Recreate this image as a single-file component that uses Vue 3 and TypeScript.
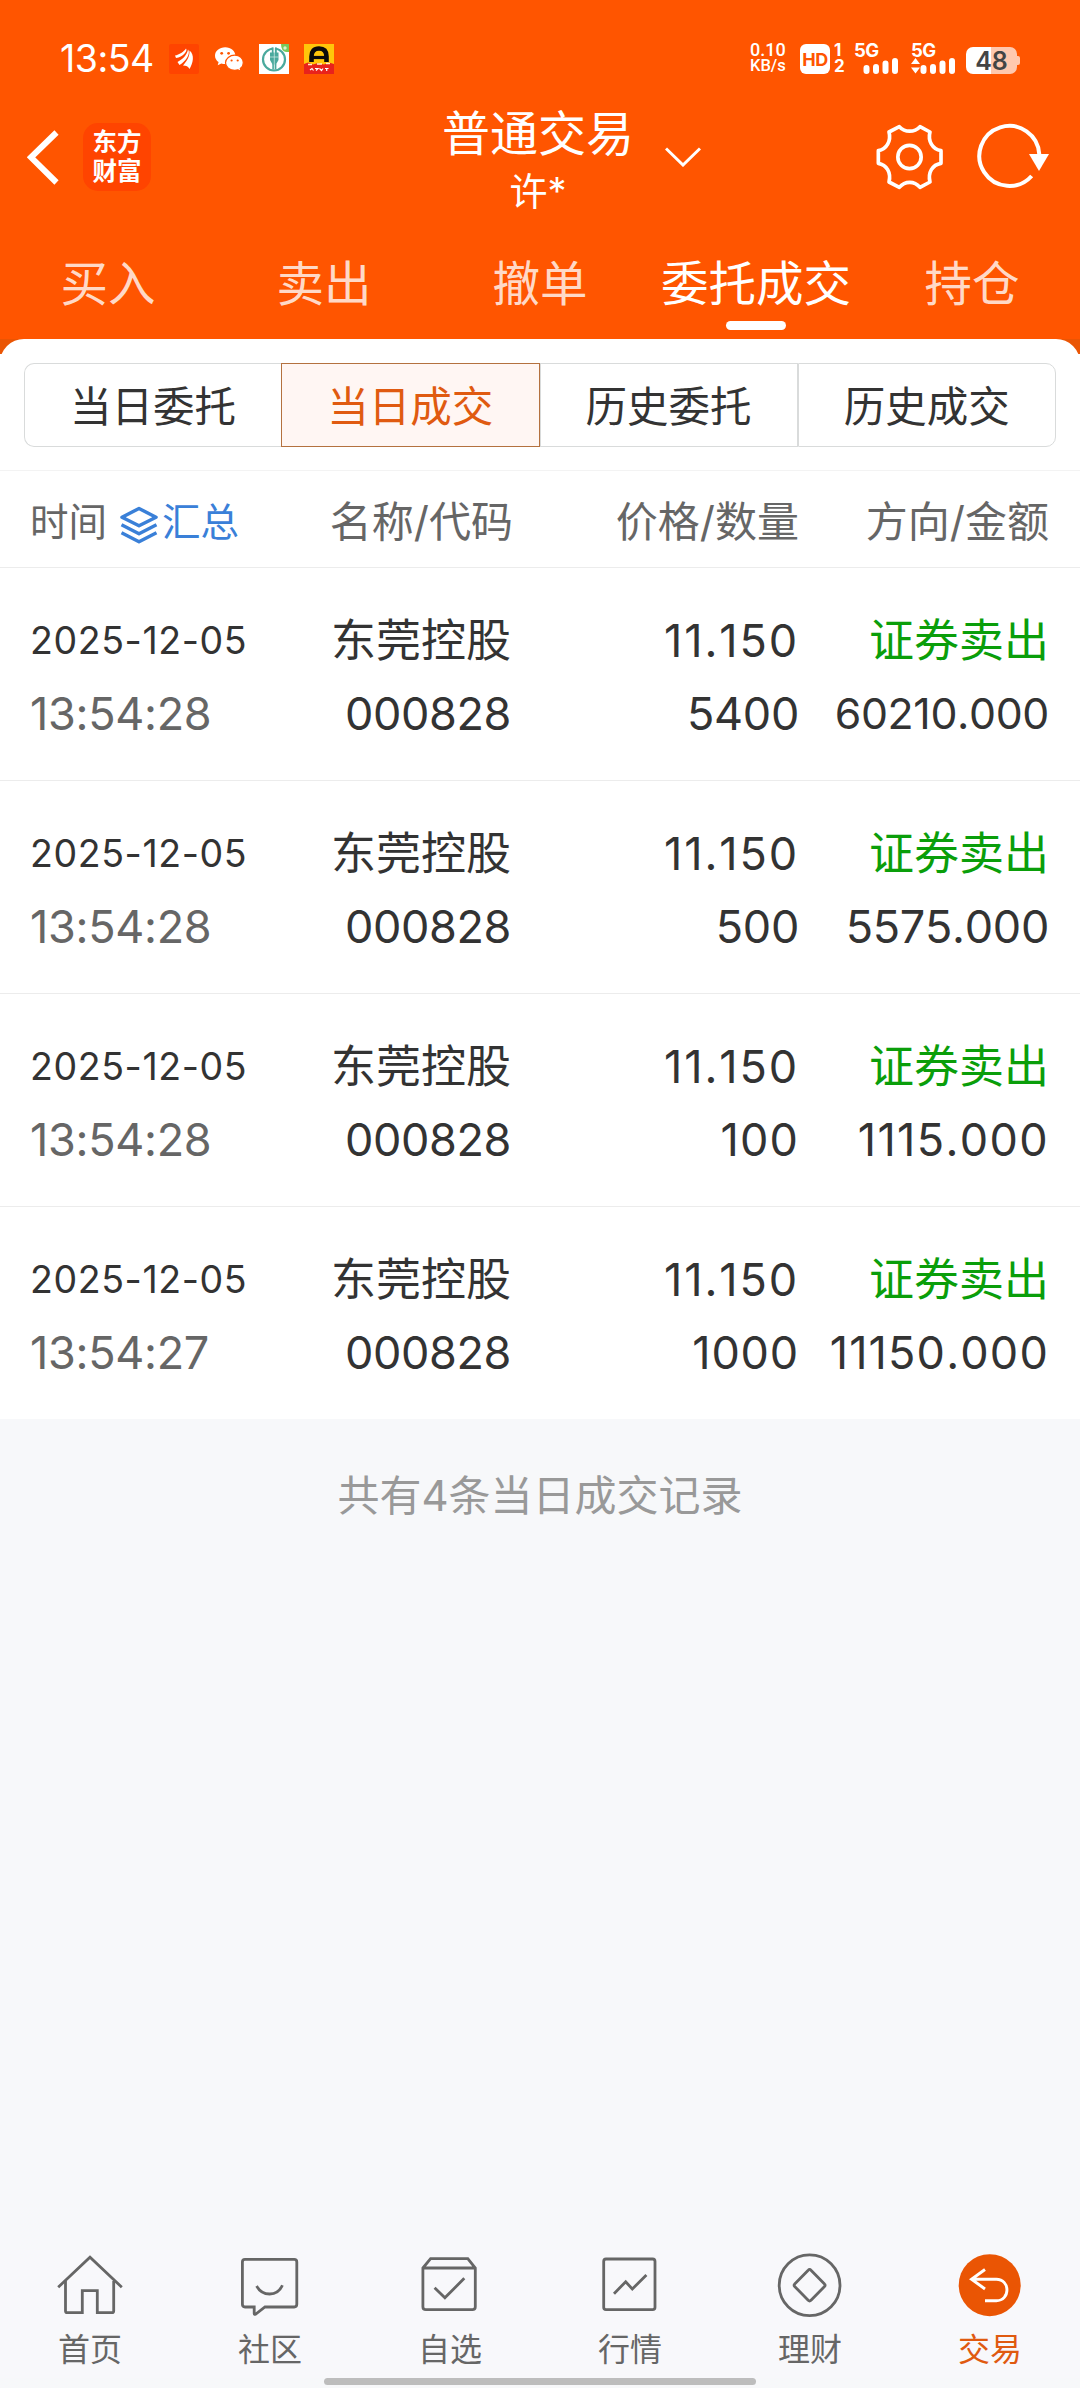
<script setup lang="ts">
interface Trade {
  date: string
  time: string
  name: string
  code: string
  price: string
  volume: string
  side: string
  amount: string
  compact?: boolean
}

const tabs: string[] = ['买入', '卖出', '撤单', '委托成交', '持仓']
const activeTab = '委托成交'

const segments: string[] = ['当日委托', '当日成交', '历史委托', '历史成交']
const activeSegment = '当日成交'

const trades: Trade[] = [
  { date: '2025-12-05', time: '13:54:28', name: '东莞控股', code: '000828', price: '11.150', volume: '5400', side: '证券卖出', amount: '60210.000', compact: true },
  { date: '2025-12-05', time: '13:54:28', name: '东莞控股', code: '000828', price: '11.150', volume: '500', side: '证券卖出', amount: '5575.000' },
  { date: '2025-12-05', time: '13:54:28', name: '东莞控股', code: '000828', price: '11.150', volume: '100', side: '证券卖出', amount: '1115.000' },
  { date: '2025-12-05', time: '13:54:27', name: '东莞控股', code: '000828', price: '11.150', volume: '1000', side: '证券卖出', amount: '11150.000' },
]

const tracking = (text: string): string => {
  const ones = text.split('1').length - 1
  return ((ones * 4.4) / text.length - 0.3).toFixed(2) + 'px'
}

interface NavItem {
  label: string
  paths: string[]
}

const navItems: NavItem[] = [
  {
    label: '首页',
    paths: ['M3.2 37.2 35 7.2 66.8 37.2', 'M10.5 31V61Q10.5 62.7 12.2 62.7H27.3V40.7H42.3V62.7H57Q58.7 62.7 58.7 61V31'],
  },
  {
    label: '社区',
    paths: ['M10 9.3H59.2Q61.8 9.3 61.8 12V54.3Q61.8 57 59.2 57H30L20.5 64.3Q19.2 64.8 19.2 63.5V57H10Q7.4 57 7.4 54.3V12Q7.4 9.3 10 9.3Z', 'M21.6 36Q26 44 34.6 44Q43.5 44 47.4 35.3'],
  },
  {
    label: '自选',
    paths: ['M7.9 18 15.6 8.7H52.8L60.3 18V56.7Q60.3 59.7 57.3 59.7H10.9Q7.9 59.7 7.9 56.7ZM7.9 18H60.3', 'M19.6 37.7 29.9 47.8 49.3 28.3'],
  },
  {
    label: '行情',
    paths: ['M11 9H57.6Q60 9 60 11.4V57.3Q60 59.7 57.6 59.7H11Q8.7 59.7 8.7 57.3V11.4Q8.7 9 11 9Z', 'M19 43.7 30.7 31.7 37.3 39 51.4 25'],
  },
  {
    label: '理财',
    paths: ['M4.2 35.3a30.4 30.4 0 1 0 60.8 0a30.4 30.4 0 1 0-60.8 0Z', 'M33.2 20.2Q34.6 18.7 36 20.2L49.5 34Q50.8 35.2 49.5 36.5L36 50.3Q34.6 51.7 33.2 50.3L19.7 36.5Q18.4 35.2 19.7 34Z'],
  },
]
</script>

<template>
  <div class="screen">
    <header class="top">
      <div class="status">
        <div class="status-left">
          <span class="clock">13:54</span>
          <svg class="app" viewBox="0 0 30 30">
            <rect width="30" height="30" rx="2" fill="#ff4400" />
            <path d="M6 11.500C10 11 15 7.500 17 4.500C19 7 14 13 7 14ZM8.500 18C14 15 18 11 19 5.500C22 9 17 17.500 10.500 21ZM14 21.500C18 17 21 12 20.500 6.500C26 11 24 19 20.500 25C19.500 22.500 17 21.500 14 21.500Z" fill="#fff" />
          </svg>
          <svg class="app" viewBox="0 0 30 30">
            <path d="M11.200 3.300C5.500 3.300 1 7 1 11.700C1 14.300 2.400 16.600 4.600 18.100L3.700 21.200L7.300 19.400C8.600 19.900 9.900 20 11.200 20C17 20 21.400 16.300 21.400 11.700S17 3.300 11.200 3.300Z" fill="#fff" />
            <path d="M20.800 11.200C15.700 11.200 11.500 14.600 11.500 18.800S15.700 26.300 20.800 26.300C21.900 26.300 23 26.100 24 25.800L27 27.300L26.300 24.600C28.200 23.200 29.300 21.200 29.300 18.800C29.300 14.600 25.800 11.200 20.800 11.200Z" fill="#fff" stroke="#ff5500" stroke-width="1.200" />
            <g fill="#ff5500"><circle cx="7.700" cy="9.300" r="1.400" /><circle cx="14.600" cy="9.300" r="1.400" /><circle cx="17.600" cy="16.500" r="1.100" /><circle cx="23.700" cy="16.500" r="1.100" /></g>
          </svg>
          <svg class="app" viewBox="0 0 30 30">
            <rect width="30" height="30" fill="#fff" />
            <circle cx="15" cy="15.500" r="11" fill="none" stroke="#4aa99d" stroke-width="2.200" />
            <path d="M14.200 0H16.200V6H14.200Z" fill="#fff" />
            <path d="M11 8.500H19.500V16L17 20.500H13.500L11 16Z" fill="#4aa99d" />
            <path d="M13.700 3.500V9M16.900 3.500V9M14.200 20V25.500M16.500 20V25.500" fill="none" stroke="#4aa99d" stroke-width="1.800" />
            <path d="M15.300 4V25M11 13H19.500" stroke="#d5eeea" stroke-width=".700" />
            <path d="M22 0H30V8H27Q22 7 22 0Z" fill="#79c95b" /><circle cx="26" cy="4" r="1.700" fill="#d8f3cd" />
          </svg>
          <svg class="app" viewBox="0 0 30 30">
            <rect width="30" height="30" fill="#ffc60a" />
            <path d="M0 20 4 18.500 9 20.500 14 19 20 20.500 25 18.500 30 20V30H0Z" fill="#e8221c" />
            <path d="M7.500 18V12.500Q7.500 4.500 15 4.500T22.500 12.500V18" fill="none" stroke="#0b0b0b" stroke-width="4.600" />
            <path d="M9 13.500H21" stroke="#0b0b0b" stroke-width="3.200" />
            <path d="M4 20.500H8M13 20H18M22 19.500H26" stroke="#fff3c0" stroke-width="1.500" />
            <path d="M6 26 8 24.500 9.500 26.500M11 24.500H14L12 26.500M15.500 24.500 17.500 26.500 19 24.500M21 24.500H24.500M22.700 24.500V27" stroke="#fff" stroke-width="1.200" fill="none" />
          </svg>
        </div>
        <div class="status-right">
          <div class="speed"><span>0.10</span><span>KB/s</span></div>
          <span class="hd">HD</span>
          <div class="sims"><span>1</span><span>2</span></div>
          <div class="signal">
            <span>5G</span>
            <svg viewBox="0 0 46 16"><path d="M9 10V13M18.500 9V13M28 5.500V13M37.500 3V13" transform="translate(3.500 0)" stroke="#fff" stroke-width="6" stroke-linecap="round" /></svg>
          </div>
          <div class="signal second">
            <span>5G</span>
            <svg viewBox="0 0 46 16"><path d="M9 10V13M18.500 9V13M28 5.500V13M37.500 3V13" transform="translate(3.500 0)" stroke="#fff" stroke-width="6" stroke-linecap="round" /><path d="M4.500 0 9 6H0ZM0 9.500H9L4.500 15.500Z" fill="#fff" /></svg>
          </div>
          <div class="battery"><span>48</span></div>
        </div>
      </div>

      <div class="bar">
        <svg class="back" viewBox="0 0 32 55"><path d="M29.500 2.500 4 27.300 29.500 52.500" fill="none" stroke="#fff" stroke-width="6" /></svg>
        <div class="logo"><span>东方</span><span>财富</span></div>
        <div class="title">
          <div class="title-main">普通交易</div>
          <div class="title-sub">许*</div>
        </div>
        <svg class="down" viewBox="0 0 36 20"><path d="M1 1.500 18 18 35 1.500" fill="none" stroke="#fff" stroke-width="3" /></svg>
        <svg class="gear" viewBox="471 309 201 204">
          <g fill="none" stroke="#fff" stroke-width="11" stroke-linejoin="round">
            <path d="M541 320C558 338 586 338 603 320L633 336C626 362 640 388 666 392V430C640 434 626 458 633 486L603 502C586 482 558 482 541 502L510 486C517 458 503 434 478 430V392C503 388 517 362 510 336Z" />
            <circle cx="571.500" cy="411" r="35" />
          </g>
        </svg>
        <svg class="refresh" viewBox="775 309 216 204">
          <path d="M939 468A90 90 0 1 1 962 404" fill="none" stroke="#fff" stroke-width="12" />
          <path d="M931 402H991L961 453Z" fill="#fff" />
        </svg>
      </div>

      <nav class="tabs">
        <div v-for="tab in tabs" :key="tab" class="tab" :class="{ active: tab === activeTab }">{{ tab }}</div>
      </nav>
    </header>

    <main class="sheet">
      <div class="sheet-top">
        <div class="segments">
          <div v-for="seg in segments" :key="seg" class="segment" :class="{ active: seg === activeSegment }">{{ seg }}</div>
        </div>
      </div>

      <div class="cols head">
        <div class="head-time">
          <span>时间</span>
          <svg class="layers" viewBox="0 0 38 38">
            <path d="M19 2.500 36 11.300 19 19.800 2 11.300ZM1.500 18.800 19 27.700 36.500 18.800M1.500 26.800 19 35.700 36.500 26.800" fill="none" stroke="#3a80d8" stroke-width="3.500" stroke-linejoin="round" />
          </svg>
          <span class="sum">汇总</span>
        </div>
        <div class="head-name">名称/代码</div>
        <div>价格/数量</div>
        <div>方向/金额</div>
      </div>

      <div v-for="(t, i) in trades" :key="i" class="cols row">
        <div class="c-time"><p class="date">{{ t.date }}</p><p class="time">{{ t.time }}</p></div>
        <div><p>{{ t.name }}</p><p class="code">{{ t.code }}</p></div>
        <div>
          <p :style="{ letterSpacing: tracking(t.price) }">{{ t.price }}</p>
          <p :style="{ letterSpacing: tracking(t.volume) }">{{ t.volume }}</p>
        </div>
        <div>
          <p class="sell">{{ t.side }}</p>
          <p v-if="t.compact" class="compact">{{ t.amount }}</p>
          <p v-else :style="{ letterSpacing: tracking(t.amount) }">{{ t.amount }}</p>
        </div>
      </div>
    </main>

    <p class="summary">共有4条当日成交记录</p>

    <footer class="nav">
      <div v-for="item in navItems" :key="item.label" class="nav-item">
        <svg viewBox="0 0 70 70"><path v-for="p in item.paths" :key="p" :d="p" fill="none" stroke="#666" stroke-width="2.800" /></svg>
        <span>{{ item.label }}</span>
      </div>
      <div class="nav-item current">
        <svg viewBox="0 0 70 70">
          <circle cx="34.700" cy="35.200" r="31" fill="#ea5504" />
          <path d="M30 19.500 16.500 29.300 30 39M16.500 29.300H41.300C55.500 29.300 55.500 50.700 41.300 50.700H30" fill="none" stroke="#fff" stroke-width="2.900" />
        </svg>
        <span>交易</span>
      </div>
    </footer>
    <div class="home-bar"></div>
  </div>
</template>

<style>
body {
  margin: 0;
  background: #f7f8fa;
}
</style>

<style scoped>
.screen {
  display: flex;
  flex-direction: column;
  width: 1080px;
  height: 2388px;
  overflow: hidden;
  background: #f7f8fa;
  color: #333;
  font-family: Inter, 'Noto Sans CJK SC', sans-serif;
}
p {
  margin: 0;
}
svg {
  display: block;
  flex: none;
}
.top {
  height: 339px;
  background: #ff5500;
  color: #fff;
}
.status {
  display: flex;
  justify-content: space-between;
  height: 74px;
  padding: 0 63px 0 60px;
  box-sizing: border-box;
}
.status-left {
  display: flex;
  align-items: flex-end;
}
.clock {
  width: 109px;
  font-size: 37.500px;
  line-height: 30px;
  letter-spacing: -0.500px;
  white-space: nowrap;
}
.app {
  width: 30px;
  height: 30px;
  margin-right: 15px;
}
.status-right {
  display: flex;
  align-items: flex-end;
}
.speed {
  display: flex;
  flex-direction: column;
  width: 50px;
  font-family: Roboto, sans-serif;
  font-size: 18px;
  line-height: 16px;
  font-weight: 500;
}
.speed span:last-child {
  font-size: 16.500px;
}
.hd {
  width: 30px;
  height: 30px;
  border-radius: 6px;
  background: #fff;
  color: #ff5500;
  font-size: 18px;
  font-weight: 700;
  line-height: 31px;
  text-align: center;
  letter-spacing: -0.500px;
}
.sims {
  display: flex;
  flex-direction: column;
  width: 20px;
  margin-left: 4px;
  font-size: 17px;
  font-weight: 700;
  line-height: 16px;
}
.signal {
  width: 57px;
  font-size: 18.500px;
  font-weight: 700;
  line-height: 15px;
  letter-spacing: -0.500px;
}
.signal.second {
  width: 55px;
}
.signal svg {
  width: 46px;
  height: 16px;
}
.battery {
  position: relative;
  width: 51px;
  height: 27px;
  border-radius: 7px;
  background: linear-gradient(90deg, #fff 49%, #ffc8ae 49%);
  color: #444;
  font-size: 25px;
  font-weight: 600;
  line-height: 28px;
  text-align: center;
}
.battery::after {
  position: absolute;
  top: 9px;
  right: -3px;
  width: 3px;
  height: 9px;
  border-radius: 0 2px 2px 0;
  background: #ffc8ae;
  content: '';
}
.bar {
  display: flex;
  align-items: center;
  height: 166px;
}
.back {
  width: 32px;
  height: 55px;
  margin-left: 27px;
}
.logo {
  display: flex;
  flex-direction: column;
  justify-content: center;
  width: 68px;
  height: 68px;
  margin-left: 24px;
  border-radius: 15px;
  background: #ff4400;
  font-size: 24.500px;
  font-weight: 700;
  line-height: 29px;
  text-align: center;
}
.title {
  width: 186px;
  margin-left: 294px;
  text-align: center;
  white-space: nowrap;
}
.title-main {
  margin: 4px -10px 0;
  font-size: 48px;
  line-height: 64px;
}
.title-sub {
  font-size: 38px;
  line-height: 50px;
}
.down {
  width: 36px;
  height: 20px;
  margin-left: 34px;
}
.gear {
  width: 67px;
  height: 68px;
  margin-left: 175px;
}
.refresh {
  width: 72px;
  height: 68px;
  margin-left: 34px;
}
.tabs {
  display: flex;
  height: 99px;
}
.tab {
  position: relative;
  flex: 1;
  color: rgba(255, 255, 255, 0.800);
  font-size: 47.500px;
  line-height: 88px;
  text-align: center;
  white-space: nowrap;
}
.tab.active {
  color: #fff;
}
.tab.active::after {
  position: absolute;
  bottom: 9px;
  left: 50%;
  width: 60px;
  height: 9px;
  margin-left: -30px;
  border-radius: 5px;
  background: #fff;
  content: '';
}
.sheet {
  background: linear-gradient(#ea5504 15px, #fff 15px);
}
.sheet-top {
  height: 131px;
  padding: 24px 24px 0;
  box-sizing: border-box;
  border-radius: 24px 24px 0 0;
  background: #fff;
}
.segments {
  display: flex;
  height: 84px;
}
.segment {
  flex: 1;
  box-sizing: border-box;
  border: 1px solid #d9dbdb;
  font-size: 41.500px;
  line-height: 87px;
  text-align: center;
}
.segment:first-child {
  border-right: 0;
  border-radius: 10px 0 0 10px;
}
.segment:last-child {
  border-radius: 0 10px 10px 0;
}
.segment.active {
  border-color: #b4713f;
  background: #fff6f3;
  color: #e05a10;
}
.cols {
  display: grid;
  grid-template-columns: 211px 270px 288px 250px;
  padding-left: 30px;
  box-sizing: border-box;
  text-align: right;
  white-space: nowrap;
}
.head {
  height: 98px;
  border-top: 1px solid #f3f3f3;
  border-bottom: 1px solid #ececec;
  color: #666;
  font-size: 42px;
  line-height: 101px;
}
.head-name {
  margin-right: -2px;
}
.head-time {
  display: flex;
  align-items: center;
  font-size: 38.500px;
}
.head-time span {
  line-height: 103px;
}
.layers {
  width: 38px;
  height: 38px;
  margin: 4px 4px 0 13px;
}
.head-time .sum {
  color: #3a80d8;
}
.row {
  height: 213px;
  padding-top: 36px;
  border-bottom: 1px solid #ececec;
  font-size: 45px;
  font-kerning: none;
  line-height: 73px;
}
.row:last-child {
  height: 212px;
  border-bottom: 0;
}
.c-time {
  text-align: left;
}
.date {
  font-size: 37.500px;
  letter-spacing: 0.600px;
}
.time {
  color: #666;
  letter-spacing: -0.300px;
}
.code {
  letter-spacing: -0.400px;
}
.sell {
  color: #0a9e0a;
}
.compact {
  font-size: 42.800px;
  letter-spacing: -0.350px;
}
.summary {
  padding-top: 47px;
  color: #999;
  font-size: 42px;
  line-height: 60px;
  text-align: center;
}
.nav {
  display: flex;
  height: 128px;
  margin-top: auto;
  background: #f8f8fb;
}
.nav-item {
  display: flex;
  flex: 1;
  flex-direction: column;
  align-items: center;
  color: #666;
  font-size: 32px;
  line-height: 59px;
}
.nav-item svg {
  width: 70px;
  height: 70px;
}
.nav-item.current {
  color: #e05a10;
}
.home-bar {
  width: 432px;
  height: 7px;
  margin: 0 auto 3px;
  border-radius: 4px;
  background: #bdbdbd;
}
</style>
